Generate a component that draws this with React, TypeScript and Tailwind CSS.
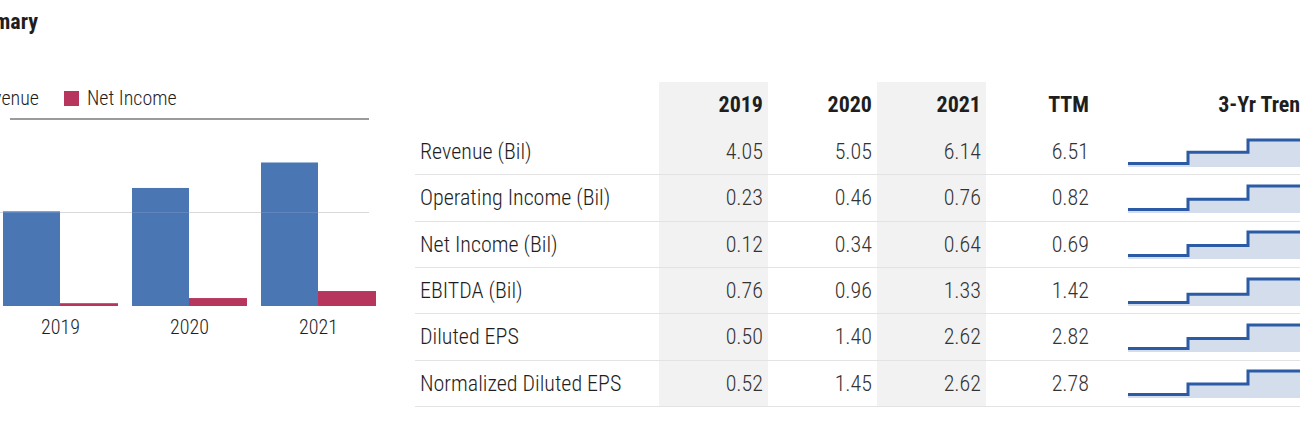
import React from 'react';

const rows: { label: string; vals: number[] }[] = [
  { label: 'Revenue (Bil)', vals: [4.05, 5.05, 6.14, 6.51] },
  { label: 'Operating Income (Bil)', vals: [0.23, 0.46, 0.76, 0.82] },
  { label: 'Net Income (Bil)', vals: [0.12, 0.34, 0.64, 0.69] },
  { label: 'EBITDA (Bil)', vals: [0.76, 0.96, 1.33, 1.42] },
  { label: 'Diluted EPS', vals: [0.5, 1.4, 2.62, 2.82] },
  { label: 'Normalized Diluted EPS', vals: [0.52, 1.45, 2.62, 2.78] },
];

const bars = [
  { year: '2019', revenue: 4.05, net: 0.12 },
  { year: '2020', revenue: 5.05, net: 0.34 },
  { year: '2021', revenue: 6.14, net: 0.64 },
];

const BASE = 192;
const SCALE = 187 / 8;

const BarChart = () => (
  <svg width="400" height="196" className="block">
    <line x1="0" x2="369" y1="98.5" y2="98.5" stroke="#d4d4d4" strokeWidth="1" />
    {bars.map((b, i) => {
      const x = 3 + i * 129;
      const rh = b.revenue * SCALE;
      const nh = b.net * SCALE;
      return (
        <g key={b.year}>
          <rect x={x} y={BASE - rh} width="57" height={rh} fill="#4a76b4" />
          <rect x={x + 57} y={BASE - nh} width="58" height={nh} fill="#b7365d" />
        </g>
      );
    })}
    <line x1="0" x2="369" y1="98.5" y2="98.5" stroke="#ffffff" strokeOpacity="0.12" strokeWidth="1" />
    <line x1="10" x2="369" y1="5" y2="5" stroke="#7a7a7a" strokeWidth="1.5" />
  </svg>
);

const Spark = ({ vals }: { vals: number[] }) => {
  const v = vals.slice(0, 3);
  const min = Math.min(...v);
  const max = Math.max(...v);
  const y = v.map((n) => 26.5 - ((n - min) / (max - min)) * 23.5);
  const line = `M0 ${y[0]} H60 V${y[1]} H120 V${y[2]} H180`;
  return (
    <svg width="180" height="30" className="block">
      <path d={`${line} V30 H0 Z`} fill="#d3ddec" />
      <path d={line} fill="none" stroke="#2c5ba5" strokeWidth="3" strokeLinejoin="miter" />
    </svg>
  );
};

const cols = 'grid grid-cols-[244px_109px_109px_109px_109px_221px]';

export default function App() {
  return (
    <div className="w-[1300px] h-[438px] overflow-hidden bg-white text-[#1e1e1e] font-light font-['Roboto_Condensed','Liberation_Sans',sans-serif]">
      <div className="h-[82px] pt-[7px]">
        <h2 className="-ml-[45px] text-[22px] leading-[30px] font-bold">Summary</h2>
      </div>

      <div className="flex">
        {/* chart */}
        <div className="w-[415px] shrink-0">
          <div className="h-[32px] -ml-[50px] flex items-center gap-[25px] text-[20px]">
            <div className="flex items-center gap-[8px]">
              <span className="w-[15px] h-[15px] bg-[#4a76b4]" />
              <span>Revenue</span>
            </div>
            <div className="flex items-center gap-[8px]">
              <span className="w-[15px] h-[15px] bg-[#b7365d]" />
              <span>Net Income</span>
            </div>
          </div>
          <BarChart />
          <div className="ml-[3px] flex gap-[14px] text-[20px] leading-[34px]">
            {bars.map((b) => (
              <div key={b.year} className="w-[115px] text-center">
                {b.year}
              </div>
            ))}
          </div>
        </div>

        {/* table */}
        <div className="w-[1000px] shrink-0 text-[22px]">
          <div className={`${cols} h-[47px] font-bold`}>
            <div />
            <div className="bg-[#f2f2f2] text-right pr-[5px] leading-[46px]">2019</div>
            <div className="text-right pr-[5px] leading-[46px]">2020</div>
            <div className="bg-[#f2f2f2] text-right pr-[5px] leading-[46px]">2021</div>
            <div className="text-right pr-[6px] leading-[46px]">TTM</div>
            <div className="text-right pr-[5px] leading-[46px]">3-Yr Trend</div>
          </div>
          {rows.map((r) => (
            <div key={r.label} className={`${cols} h-[46.33px] border-b border-[#e3e3e3]`}>
              <div className="pl-[5px] flex items-center">{r.label}</div>
              <div className="bg-[#f2f2f2] pr-[5px] flex items-center justify-end text-[#333]">
                {r.vals[0].toFixed(2)}
              </div>
              <div className="pr-[5px] flex items-center justify-end text-[#333]">{r.vals[1].toFixed(2)}</div>
              <div className="bg-[#f2f2f2] pr-[5px] flex items-center justify-end text-[#333]">
                {r.vals[2].toFixed(2)}
              </div>
              <div className="pr-[6px] flex items-center justify-end text-[#333]">{r.vals[3].toFixed(2)}</div>
              <div className="pl-[33px] flex items-center">
                <Spark vals={r.vals} />
              </div>
            </div>
          ))}
        </div>
      </div>
    </div>
  );
}
